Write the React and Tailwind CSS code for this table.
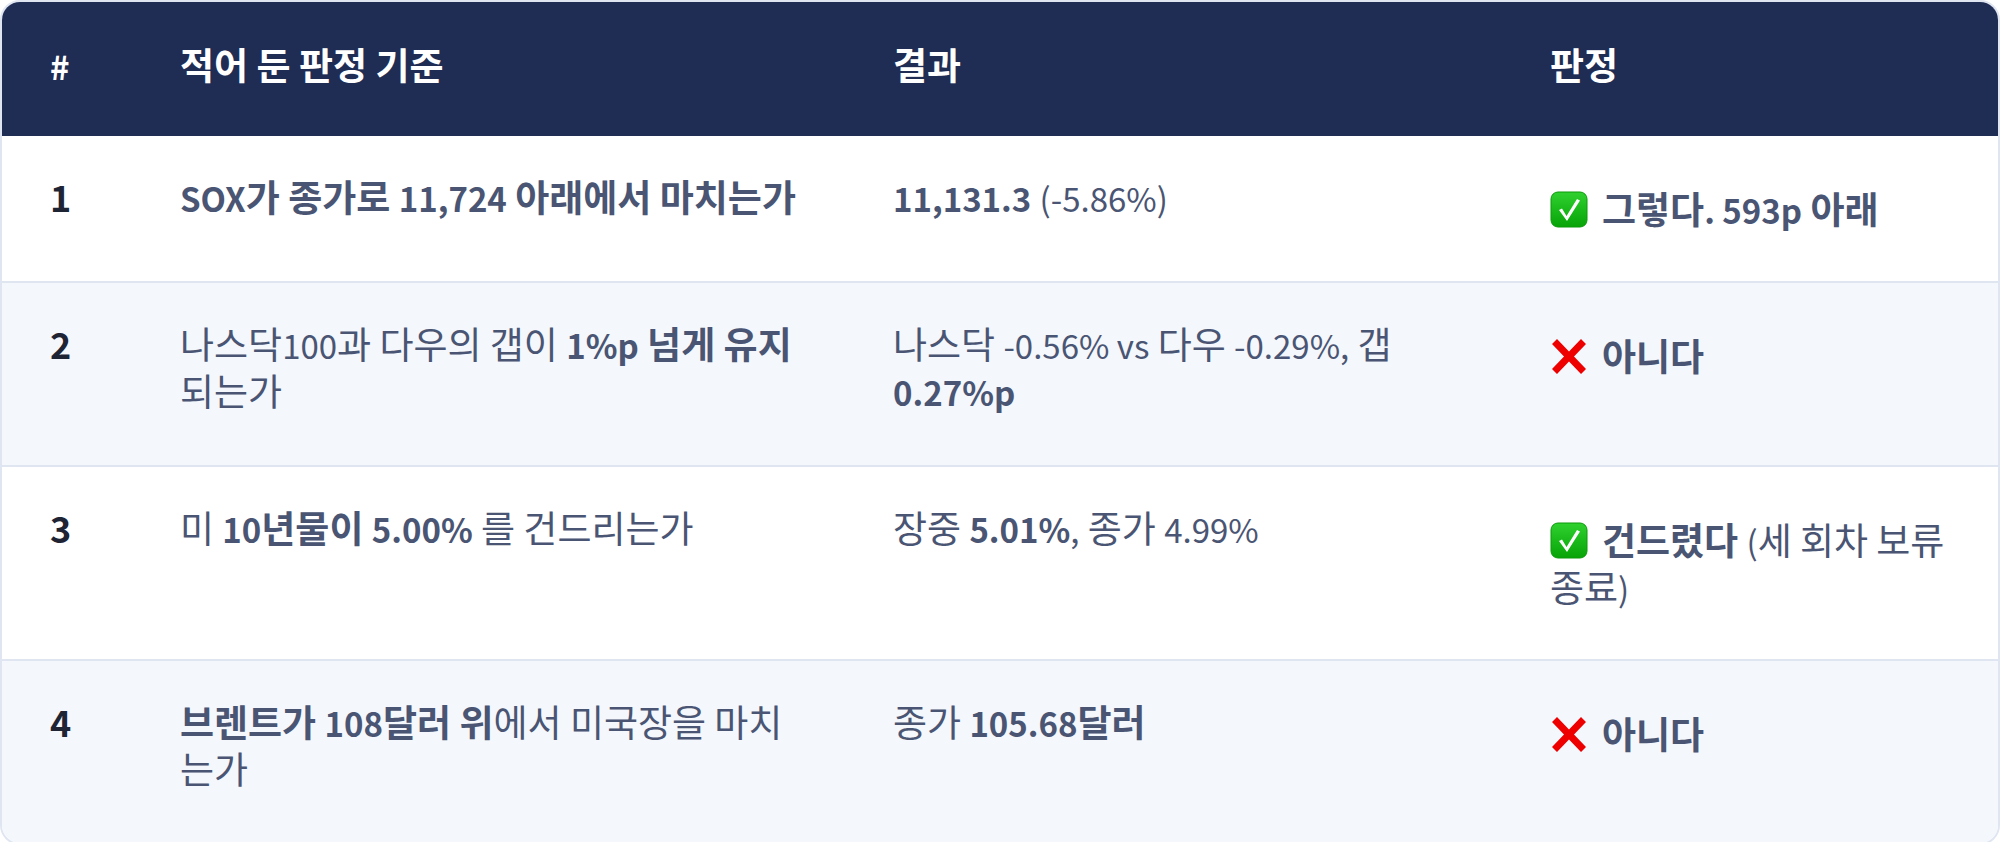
import React from 'react';

// Latin runs sit a touch smaller than the Hangul, like the reference font
const L = ({ children }) => <span className="text-[33px] leading-none">{children}</span>;

const CheckMark = () => (
  <svg viewBox="0 0 38 37" className="inline-block w-[38px] h-[37px] align-[-4px] mr-[14px]">
    <defs>
      <linearGradient id="chk" x1="0" y1="0" x2="0" y2="1">
        <stop offset="0" stopColor="#2fd12f" />
        <stop offset="1" stopColor="#07a307" />
      </linearGradient>
    </defs>
    <rect x="1" y="1" width="36" height="35" rx="7" fill="url(#chk)" stroke="#0a9a0a" strokeWidth="1" />
    <path d="M9 19 L12 17.5 L16.5 25 L27 8 L30 9.5 L17 30 Z" fill="#ffffff" />
  </svg>
);

const CrossMark = () => (
  <svg viewBox="0 0 38 37" className="inline-block w-[38px] h-[37px] align-[-4px] mr-[14px]">
    <path
      d="M2 6 L7 1 L19 13.5 L31 1 L36 6 L24 18.5 L36 31 L31 36 L19 23.5 L7 36 L2 31 L14 18.5 Z"
      fill="#ee0000"
    />
  </svg>
);

const rows = [
  {
    n: '1',
    criterion: (
      <b className="font-bold">
        <L>SOX</L>가 종가로 <L>11,724</L> 아래에서 마치는가
      </b>
    ),
    result: (
      <>
        <b className="font-bold">
          <L>11,131.3</L>
        </b>{' '}
        <L>(-5.86%)</L>
      </>
    ),
    verdict: (
      <>
        <CheckMark />
        <b className="font-bold">
          그렇다<L>. 593p</L> 아래
        </b>
      </>
    ),
  },
  {
    n: '2',
    criterion: (
      <>
        나스닥<L>100</L>과 다우의 갭이{' '}
        <b className="font-bold">
          <L>1%p</L> 넘게 유지
        </b>
        되는가
      </>
    ),
    result: (
      <>
        나스닥 <L>-0.56% vs</L> 다우 <L>-0.29%,</L> 갭{' '}
        <b className="font-bold">
          <L>0.27%p</L>
        </b>
      </>
    ),
    verdict: (
      <>
        <CrossMark />
        <b className="font-bold">아니다</b>
      </>
    ),
  },
  {
    n: '3',
    criterion: (
      <>
        미{' '}
        <b className="font-bold">
          <L>10</L>년물이 <L>5.00%</L>
        </b>{' '}
        를 건드리는가
      </>
    ),
    result: (
      <>
        장중{' '}
        <b className="font-bold">
          <L>5.01%</L>
        </b>
        <L>,</L> 종가 <L>4.99%</L>
      </>
    ),
    verdict: (
      <>
        <CheckMark />
        <b className="font-bold">건드렸다</b> <L>(</L>세 회차 보류 종료<L>)</L>
      </>
    ),
  },
  {
    n: '4',
    criterion: (
      <>
        <b className="font-bold">
          브렌트가 <L>108</L>달러 위
        </b>
        에서 미국장을 마치는가
      </>
    ),
    result: (
      <>
        종가{' '}
        <b className="font-bold">
          <L>105.68</L>달러
        </b>
      </>
    ),
    verdict: (
      <>
        <CrossMark />
        <b className="font-bold">아니다</b>
      </>
    ),
  },
];

export default function App() {
  return (
    <div className="w-[2000px] h-[842px] bg-white font-['Noto_Sans_CJK_KR','Noto_Sans',sans-serif] text-[37px] leading-[47px]">
      <div className="border-2 border-[#dfe5f1] rounded-[20px] overflow-hidden">
        <table className="w-full table-fixed">
          <colgroup>
            <col className="w-[130px]" />
            <col className="w-[713px]" />
            <col className="w-[657px]" />
            <col className="w-[496px]" />
          </colgroup>
          <thead className="bg-[#1f2c54] text-white">
            <tr>
              <th className="pl-[48px] pr-[8px] pt-[39px] pb-[48px] text-left font-bold">
                <L>#</L>
              </th>
              <th className="pl-[48px] pr-[40px] pt-[39px] pb-[48px] text-left font-bold">적어 둔 판정 기준</th>
              <th className="px-[48px] pt-[39px] pb-[48px] text-left font-bold">결과</th>
              <th className="px-[48px] pt-[39px] pb-[48px] text-left font-bold">판정</th>
            </tr>
          </thead>
          <tbody className="text-[#4a5573]">
            {rows.map((r, i) => {
              const line = i < rows.length - 1 ? 'border-b-2 border-[#dfe5f1]' : '';
              return (
                <tr key={r.n} className={i % 2 === 1 ? 'bg-[#f4f7fc]' : 'bg-white'}>
                  <td className={`pl-[48px] pr-[8px] pt-[37px] pb-[51px] align-top text-[36px] font-bold text-[#1e2433] ${line}`}>
                    {r.n}
                  </td>
                  <td className={`pl-[48px] pr-[40px] pt-[37px] pb-[51px] align-top ${line}`}>{r.criterion}</td>
                  <td className={`px-[48px] pt-[37px] pb-[51px] align-top ${line}`}>{r.result}</td>
                  <td className={`pl-[48px] pr-[40px] pt-[49px] pb-[49px] align-top ${line}`}>{r.verdict}</td>
                </tr>
              );
            })}
          </tbody>
        </table>
      </div>
    </div>
  );
}
